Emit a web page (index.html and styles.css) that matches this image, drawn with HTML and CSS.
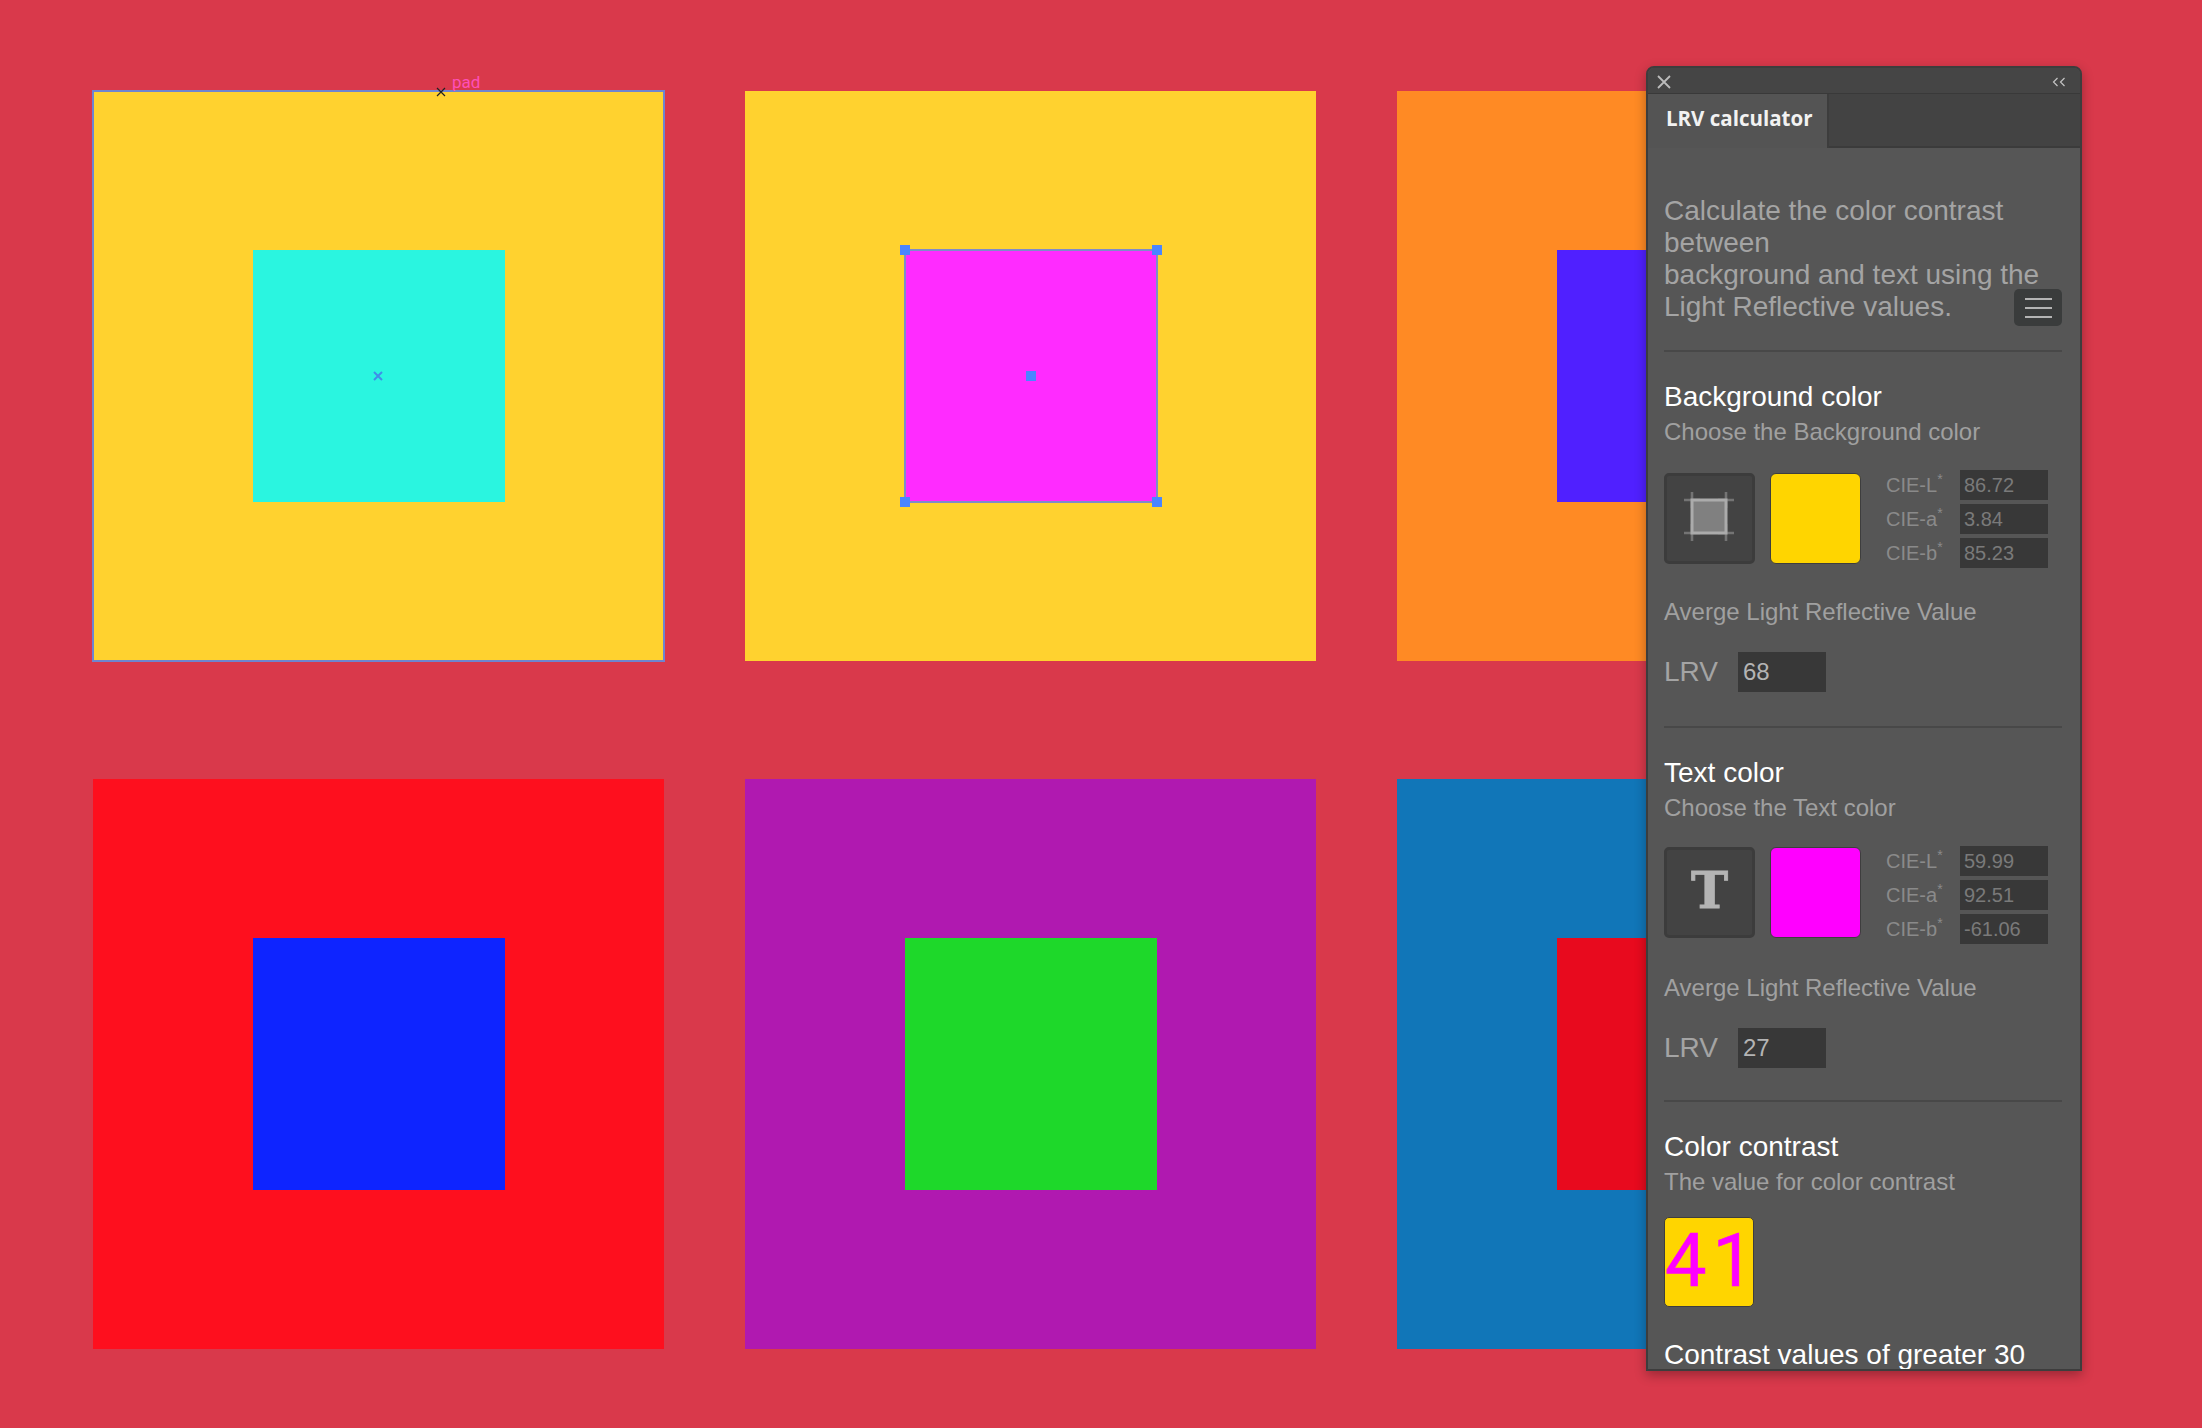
FILE: index.html
```html
<!DOCTYPE html>
<html lang="en">
<head>
	<meta charset="UTF-8">
	<title>LRV calculator</title>
	<link rel="stylesheet" href="styles.css">
</head>
<body>
<div class="canvas">
	<div class="board board-yellow">
		<div class="square sq-cyan"></div>
		<svg class="mark-center" width="10" height="10" viewBox="0 0 10 10"><path d="M1 1L9 9M9 1L1 9" stroke="#3f8fe8" stroke-width="2"/></svg>
		<svg class="mark-cursor" width="10" height="10" viewBox="0 0 10 10"><path d="M1 1L9 9M9 1L1 9" stroke="#222" stroke-width="1.2"/></svg>
		<span class="pad-label">pad</span>
	</div>
	<div class="board board-yellow2">
		<div class="square sq-magenta">
			<i class="handle h-tl"></i>
			<i class="handle h-tr"></i>
			<i class="handle h-bl"></i>
			<i class="handle h-br"></i>
			<i class="handle h-c"></i>
		</div>
	</div>
	<div class="board board-orange"><div class="square sq-violet"></div></div>
	<div class="board board-red"><div class="square sq-blue"></div></div>
	<div class="board board-purple"><div class="square sq-green"></div></div>
	<div class="board board-teal"><div class="square sq-crimson"></div></div>
</div>

<div class="panel">
	<div class="title-bar">
		<svg width="14" height="14" viewBox="0 0 14 14"><path d="M1 1L13 13M13 1L1 13" stroke="#bcbcbc" stroke-width="1.8"/></svg>
		<svg width="14" height="10" viewBox="0 0 14 10"><path d="M5.5 1L1.5 5L5.5 9M12.5 1L8.5 5L12.5 9" fill="none" stroke="#c4c4c4" stroke-width="1.2"/></svg>
	</div>
	<div class="tab-bar">
		<div class="tab">LRV calculator</div>
	</div>
	<div class="panel-body">
		<div class="intro">
			Calculate the color contrast<br>between<br>background and text using the<br>Light Reflective values.
			<div class="menu-btn"><i></i><i></i><i></i></div>
		</div>

		<div class="section">
			<div class="heading">Background color</div>
			<div class="sub">Choose the Background color</div>
			<div class="picker">
				<div class="tool">
					<svg width="52" height="52" viewBox="0 0 52 52">
						<path d="M0 9H16M34 9H50M0 42H16M34 42H50M8 1V17M8 33V50M42 1V17M42 33V50" stroke="#747474" stroke-width="2.6"/>
						<rect x="8" y="9" width="34" height="33" fill="#808080" stroke="#ababab" stroke-width="3"/>
					</svg>
				</div>
				<div class="swatch swatch-yellow"></div>
				<div class="cie">
					<div class="cie-row"><span class="cie-label">CIE-L<sup>*</sup></span><span class="field">86.72</span></div>
					<div class="cie-row"><span class="cie-label">CIE-a<sup>*</sup></span><span class="field">3.84</span></div>
					<div class="cie-row"><span class="cie-label">CIE-b<sup>*</sup></span><span class="field">85.23</span></div>
				</div>
			</div>
			<div class="sub avg">Averge Light Reflective Value</div>
			<div class="lrv"><span class="lrv-label">LRV</span><span class="lrv-field">68</span></div>
		</div>

		<div class="section">
			<div class="heading">Text color</div>
			<div class="sub">Choose the Text color</div>
			<div class="picker">
				<div class="tool tool-text">T</div>
				<div class="swatch swatch-magenta"></div>
				<div class="cie">
					<div class="cie-row"><span class="cie-label">CIE-L<sup>*</sup></span><span class="field">59.99</span></div>
					<div class="cie-row"><span class="cie-label">CIE-a<sup>*</sup></span><span class="field">92.51</span></div>
					<div class="cie-row"><span class="cie-label">CIE-b<sup>*</sup></span><span class="field">-61.06</span></div>
				</div>
			</div>
			<div class="sub avg">Averge Light Reflective Value</div>
			<div class="lrv"><span class="lrv-label">LRV</span><span class="lrv-field">27</span></div>
		</div>

		<div class="result">
			<div class="heading">Color contrast</div>
			<div class="sub">The value for color contrast</div>
			<div class="score">41</div>
			<div class="heading note">Contrast values of greater 30</div>
		</div>
	</div>
</div>
</body>
</html>
```

FILE: styles.css
```css
*{
	box-sizing: border-box;
}
html,body{
	margin: 0;
	height: 100%;
}
body{
	position: relative;
	width: 2202px;
	height: 1428px;
	overflow: hidden;
	background-color: #d9394b;
	font-family: "Liberation Sans", Arial, sans-serif;
}

/* artboards */
.canvas{
	display: grid;
	grid-template-columns: repeat(3, 571px);
	grid-template-rows: repeat(2, 570px);
	column-gap: 81px;
	row-gap: 118px;
	padding: 91px 0 0 93px;
}
.board{
	position: relative;
	display: flex;
	align-items: center;
	justify-content: center;
}
.square{
	position: relative;
	width: 252px;
	height: 252px;
}
.board-yellow{
	background-color: #ffd22f;
	outline: 2px solid #6f85cf;
	outline-offset: -1px;
}
.board-yellow2{ background-color: #ffd22f; }
.board-orange{ background-color: #ff8a24; }
.board-red{ background-color: #fe0f1e; }
.board-purple{ background-color: #b019b0; }
.board-teal{ background-color: #1176b8; }
.sq-cyan{ background-color: #2af5e0; }
.sq-magenta{
	background-color: #ff2bff;
	outline: 2px solid #7f8bc8;
	outline-offset: -1px;
}
.sq-violet{ background-color: #5020ff; }
.sq-blue{ background-color: #0e24ff; }
.sq-green{ background-color: #1ed82a; }
.sq-crimson{ background-color: #e80a1e; }

.mark-center{
	position: absolute;
	left: 280px;
	top: 280px;
}
.mark-cursor{
	position: absolute;
	left: 343px;
	top: -4px;
}
.pad-label{
	position: absolute;
	left: 359px;
	top: -19px;
	font-family: Roboto, sans-serif;
	font-size: 17px;
	line-height: 20px;
	color: #ff4fb8;
}
.handle{
	position: absolute;
	width: 10px;
	height: 10px;
	background-color: #4a85ff;
}
.h-tl{ left: -5px; top: -5px; }
.h-tr{ right: -5px; top: -5px; }
.h-bl{ left: -5px; bottom: -5px; }
.h-br{ right: -5px; bottom: -5px; }
.h-c{ left: 121px; top: 121px; }

/* floating panel */
.panel{
	position: absolute;
	left: 1646px;
	top: 66px;
	width: 436px;
	height: 1305px;
	display: flex;
	flex-direction: column;
	overflow: hidden;
	background-color: #565656;
	border: 2px solid #3d3d3d;
	border-radius: 8px 8px 0 0;
	box-shadow: 0 4px 12px rgba(0,0,0,.3);
}
.title-bar{
	flex: none;
	display: flex;
	align-items: center;
	justify-content: space-between;
	height: 26px;
	padding: 2px 14px 0 9px;
	background-color: #454545;
	border-bottom: 1px solid #393939;
}
.tab-bar{
	flex: none;
	height: 54px;
	background-color: #434343;
	border-bottom: 2px solid #3b3b3b;
}
.tab{
	width: 181px;
	height: 54px;
	padding-left: 18px;
	background-color: #545454;
	border-right: 2px solid #3d3d3d;
	font-family: "Open Sans", sans-serif;
	font-weight: 700;
	font-size: 20.5px;
	line-height: 48px;
	color: #f2f2f2;
}
.panel-body{
	flex: 1;
	padding: 0 18px 0 16px;
}
.intro{
	position: relative;
	padding-top: 47px;
	padding-bottom: 27px;
	font-size: 28px;
	line-height: 32px;
	color: #a4a4a4;
}
.menu-btn{
	position: absolute;
	right: 0;
	bottom: 24px;
	width: 48px;
	height: 37px;
	display: flex;
	flex-direction: column;
	align-items: center;
	justify-content: center;
	gap: 7px;
	background-color: #3a3c3c;
	border-radius: 5px;
}
.menu-btn i{
	width: 27px;
	height: 2px;
	background-color: #b4b4b4;
}
.section{
	border-top: 2px solid #484848;
	padding-top: 29px;
	padding-bottom: 34px;
}
.section + .section{
	padding-bottom: 32px;
}
.heading{
	font-size: 28px;
	line-height: 32px;
	color: #fff;
}
.sub{
	margin-top: 4px;
	font-size: 24px;
	line-height: 30px;
	color: #a0a0a0;
}
.picker{
	display: flex;
	align-items: flex-start;
	margin-top: 23px;
}
.tool{
	flex: none;
	width: 91px;
	height: 91px;
	margin-top: 3px;
	display: flex;
	align-items: center;
	justify-content: center;
	background-color: #434343;
	border: 3px solid #3c3c3c;
	border-radius: 5px;
}
.tool svg{
	margin-top: -4px;
}
.tool-text{
	margin-top: 1px;
	align-items: flex-start;
	font-family: "DejaVu Serif", serif;
	font-weight: 700;
	font-size: 50px;
	line-height: 81px;
	color: #b4b4b4;
	-webkit-text-stroke: .8px #b4b4b4;
}
.swatch{
	flex: none;
	width: 91px;
	height: 91px;
	margin-top: 3px;
	margin-left: 15px;
	border: 1px solid #3e3e3e;
	border-radius: 6px;
}
.swatch-yellow{ background-color: #ffd500; }
.swatch-magenta{
	margin-top: 1px;
	background-color: #ff00ff;
}
.cie{
	display: flex;
	flex-direction: column;
	gap: 4px;
	margin-left: 25px;
}
.cie-row{
	display: flex;
	align-items: center;
}
.cie-label{
	width: 74px;
	font-size: 20px;
	color: #8a8a8a;
}
.cie-label sup{
	font-size: 14px;
	line-height: 0;
	vertical-align: 8px;
}
.field{
	width: 88px;
	height: 30px;
	padding-left: 4px;
	background-color: #383838;
	font-size: 20px;
	line-height: 30px;
	color: #7a7a7a;
}
.avg{
	margin-top: 29px;
}
.lrv{
	display: flex;
	align-items: center;
	margin-top: 25px;
}
.lrv-label{
	width: 74px;
	font-size: 28px;
	line-height: 36px;
	color: #a4a4a4;
}
.lrv-field{
	width: 88px;
	height: 40px;
	padding-left: 5px;
	background-color: #383838;
	font-size: 24px;
	line-height: 40px;
	color: #b4b4b4;
}
.result{
	border-top: 2px solid #484848;
	padding-top: 29px;
}
.score{
	width: 90px;
	height: 90px;
	margin-top: 20px;
	background-color: #ffd500;
	border: 1px solid #3e3e3e;
	border-radius: 5px;
	font-family: Roboto, sans-serif;
	font-size: 74px;
	line-height: 86px;
	letter-spacing: 6px;
	color: #ff00ff;
	-webkit-text-stroke: .6px #ff00ff;
}
.note{
	margin-top: 32px;
}
```
